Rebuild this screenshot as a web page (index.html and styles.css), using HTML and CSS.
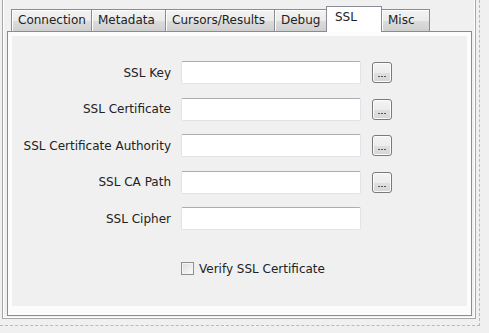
FILE: index.html
```html
<!DOCTYPE html>
<html lang="en">
<head>
  <meta charset="UTF-8" />
  <title>Connection settings - SSL</title>
  <link rel="stylesheet" href="styles.css">
</head>
<body>
  <div class="focus">
    <div class="frame">
      <div class="tabbar">
        <div class="tab tab-connection">Connection</div>
        <div class="tab tab-metadata">Metadata</div>
        <div class="tab tab-cursors">Cursors/Results</div>
        <div class="tab tab-debug">Debug</div>
        <div class="tab tab-ssl active">SSL</div>
        <div class="tab tab-misc">Misc</div>
      </div>

      <div class="pane">
        <div class="page">
          <!-- SSL form -->
          <div class="form">
            <label class="label">SSL Key</label>
            <input class="field" type="text">
            <button class="browse"><span class="dots"></span></button>

            <label class="label">SSL Certificate</label>
            <input class="field" type="text">
            <button class="browse"><span class="dots"></span></button>

            <label class="label">SSL Certificate Authority</label>
            <input class="field" type="text">
            <button class="browse"><span class="dots"></span></button>

            <label class="label">SSL CA Path</label>
            <input class="field" type="text">
            <button class="browse"><span class="dots"></span></button>

            <label class="label">SSL Cipher</label>
            <input class="field" type="text">
            <span></span>

            <label class="check">
              <span class="box"></span>
              <span>Verify SSL Certificate</span>
            </label>
          </div>
        </div>
      </div>
    </div>
  </div>
</body>
</html>
```

FILE: styles.css
```css
body {
  margin: 0;
  background: #f0f0f0;
  font-family: "DejaVu Sans", Tahoma, sans-serif;
  font-size: 12px;
  color: #222;
}

.focus {
  width: 479px;
  height: 325px;
  border-right: 1px dashed #b9b9b9;
  border-bottom: 1px dashed #b9b9b9;
}

.frame {
  box-sizing: border-box;
  margin-left: 2px;
  width: 474px;
  height: 319px;
  padding: 6px 3px 2px 4px;
  border: 1px solid #a7a7a7;
  border-top: none;
  box-shadow: inset 1px 0 0 #fff, inset -1px -1px 0 #fff;
}

/* Tabs */
.tabbar {
  display: flex;
  align-items: flex-end;
  height: 25px;
  padding-left: 4px;
}

.tab {
  box-sizing: border-box;
  height: 22px;
  padding: 3px 0 0 6px;
  border: 1px solid #898c95;
  border-bottom: none;
  margin-right: -1px;
  background: linear-gradient(#f3f3f3, #ebebeb 50%, #dddddd 51%, #cfcfcf);
  box-shadow: inset 1px 1px 0 #fff;
  white-space: nowrap;
  overflow: hidden;
}

.tab-connection { width: 81px; }
.tab-metadata { width: 75px; }
.tab-cursors { width: 110px; }
.tab-debug { width: 53px; }
.tab-ssl { width: 56px; }
.tab-misc { width: 49px; }

.tab.active {
  position: relative;
  z-index: 1;
  height: 26px;
  margin-bottom: -1px;
  padding: 3px 0 0 8px;
  background: #fff;
  box-shadow: none;
}

.pane {
  box-sizing: border-box;
  height: 285px;
  padding: 4px 4px 9px 4px;
  border: 1px solid #898c95;
  background: #fcfcfc;
}

.page {
  height: 100%;
  background: #f0f0f0;
  padding-top: 25px;
  box-sizing: border-box;
}

/* Form */
.form {
  display: grid;
  grid-template-columns: 159px 180px 20px;
  column-gap: 10px;
  row-gap: 13.5px;
  align-items: center;
}

.form .browse {
  margin-left: 1px;
}

.label {
  text-align: right;
}

.field {
  box-sizing: border-box;
  height: 23px;
  width: 180px;
  margin: 0;
  border: 1px solid #e0e3e8;
  border-top-color: #abadb3;
  border-radius: 2px;
  background: #fff;
}

.browse {
  box-sizing: border-box;
  width: 20px;
  height: 21px;
  padding: 0;
  margin: 0;
  border: 1px solid #7a7a7a;
  border-radius: 3px;
  background: linear-gradient(#f4f4f4, #ececec 50%, #e0e0e0 51%, #d6d6d6);
  box-shadow: inset 0 0 0 1px #fcfcfc;
  position: relative;
}

.dots {
  position: absolute;
  left: 5px;
  bottom: 5px;
  width: 2px;
  height: 1px;
  background: #555;
  box-shadow: 3px 0 0 #555, 6px 0 0 #555;
}

.check {
  grid-column: 2 / 4;
  display: flex;
  align-items: center;
  gap: 5px;
  margin-top: 18px;
}

.box {
  box-sizing: border-box;
  width: 13px;
  height: 13px;
  border: 1px solid #8e8f8f;
  background: linear-gradient(135deg, #dcdcdc, #fbfbfb);
  box-shadow: inset 0 0 0 1px #f4f4f4;
}
```
